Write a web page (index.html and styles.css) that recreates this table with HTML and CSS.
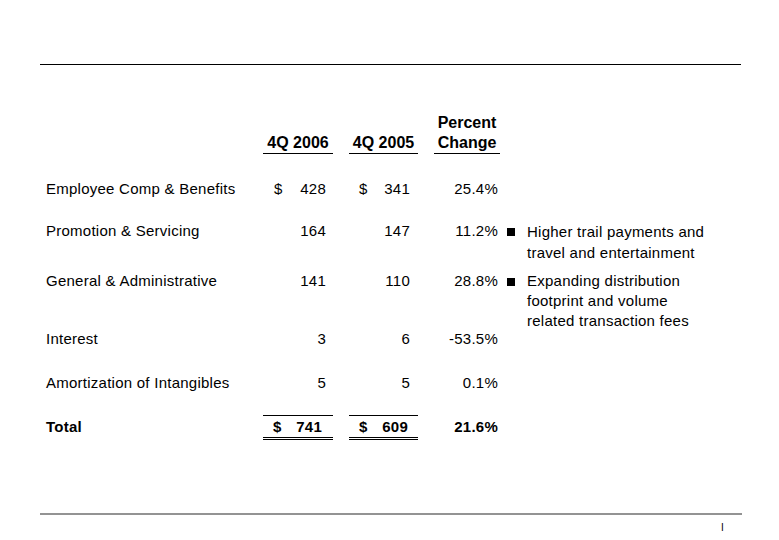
FILE: index.html
```html
<!DOCTYPE html>
<html>
<head>
<meta charset="utf-8">
<link rel="stylesheet" href="styles.css">
</head>
<body>
<div class="page">
  <div class="rule-top"></div>
  <div class="table">
    <div class="row head">
      <div class="label"></div>
      <div class="col c1 hcell">4Q 2006</div>
      <div class="col c2 hcell">4Q 2005</div>
      <div class="col c3 hcell">Percent<br>Change</div>
    </div>
    <div class="row r-emp">
      <div class="label">Employee Comp &amp; Benefits</div>
      <div class="col c1 money"><span>$</span><span>428</span></div>
      <div class="col c2 money"><span>$</span><span>341</span></div>
      <div class="col c3 pct">25.4%</div>
    </div>
    <div class="row r-promo">
      <div class="label">Promotion &amp; Servicing</div>
      <div class="col c1 money"><span></span><span>164</span></div>
      <div class="col c2 money"><span></span><span>147</span></div>
      <div class="col c3 pct">11.2%</div>
      <div class="note"><span class="bullet"></span><span class="note-text">Higher trail payments and<br>travel and entertainment</span></div>
    </div>
    <div class="row r-ga">
      <div class="label">General &amp; Administrative</div>
      <div class="col c1 money"><span></span><span>141</span></div>
      <div class="col c2 money"><span></span><span>110</span></div>
      <div class="col c3 pct">28.8%</div>
      <div class="note"><span class="bullet"></span><span class="note-text">Expanding distribution<br>footprint and volume<br>related transaction fees</span></div>
    </div>
    <div class="row r-int">
      <div class="label">Interest</div>
      <div class="col c1 money"><span></span><span>3</span></div>
      <div class="col c2 money"><span></span><span>6</span></div>
      <div class="col c3 pct">-53.5%</div>
    </div>
    <div class="row r-amort">
      <div class="label">Amortization of Intangibles</div>
      <div class="col c1 money"><span></span><span>5</span></div>
      <div class="col c2 money"><span></span><span>5</span></div>
      <div class="col c3 pct">0.1%</div>
    </div>
    <div class="row total">
      <div class="label">Total</div>
      <div class="col c1 money sum"><span>$</span><span>741</span></div>
      <div class="col c2 money sum"><span>$</span><span>609</span></div>
      <div class="col c3 pct">21.6%</div>
    </div>
  </div>
  <div class="footer">
    <div class="rule-bottom"></div>
    <div class="pagenum">I</div>
  </div>
</div>
</body>
</html>
```

FILE: styles.css
```css
html, body {
  margin: 0;
  padding: 0;
  background: #fff;
}
body {
  font-family: "Liberation Sans", Arial, sans-serif;
  font-size: 15px;
  line-height: 20px;
  letter-spacing: 0.25px;
  color: #000;
}
.page {
  width: 779px;
  height: 540px;
  display: flex;
  flex-direction: column;
  overflow: hidden;
}
.rule-top {
  margin: 64px 38px 0 40px;
  border-top: 1px solid #000;
}
.table {
  margin: 48px 0 0 46px;
  display: flex;
  flex-direction: column;
}
.row {
  display: flex;
  align-items: flex-start;
}
.label {
  width: 217px;
  flex: none;
  white-space: nowrap;
}
.col {
  flex: none;
  white-space: nowrap;
}
.c1 { width: 70px; }
.c2 { width: 69px; margin-left: 16px; }
.c3 { width: 66px; margin-left: 16px; }

.head {
  align-items: flex-end;
  margin-bottom: 25px;
}
.hcell {
  font-size: 16px;
  letter-spacing: 0;
  font-weight: bold;
  text-align: center;
  border-bottom: 1px solid #000;
}

.money {
  display: flex;
  justify-content: space-between;
  padding: 0 7px 0 11px;
  box-sizing: border-box;
}
.c2.money { padding: 0 8px 0 10px; }
.pct {
  text-align: right;
  padding-right: 2px;
  box-sizing: border-box;
}

.r-emp { height: 42px; }
.r-promo { height: 50px; }
.r-ga { height: 58px; }
.r-int { height: 44px; }
.r-amort { height: 42px; }

.note {
  display: flex;
  align-items: flex-start;
  padding-left: 7px;
}
.bullet {
  flex: none;
  width: 8px;
  height: 8px;
  background: #000;
  margin-top: 7px;
  margin-right: 12px;
}
.note-text {
  white-space: nowrap;
}
.r-promo .note-text { line-height: 21px; }

.total {
  font-weight: bold;
}
.total .label,
.total .pct {
  padding-top: 2px;
}
.sum {
  border-top: 1px solid #000;
  border-bottom: 3px double #000;
  padding-top: 1px;
}
.c1.sum { padding: 1px 11px 0 10px; }
.c2.sum { padding: 1px 10px 0 10px; }

.footer {
  margin-top: auto;
  padding-bottom: 7px;
}
.rule-bottom {
  margin: 0 37px 0 40px;
  height: 2px;
  background: #939393;
}
.pagenum {
  font-size: 10px;
  line-height: 11px;
  margin-top: 7px;
  padding-left: 721px;
}
```
